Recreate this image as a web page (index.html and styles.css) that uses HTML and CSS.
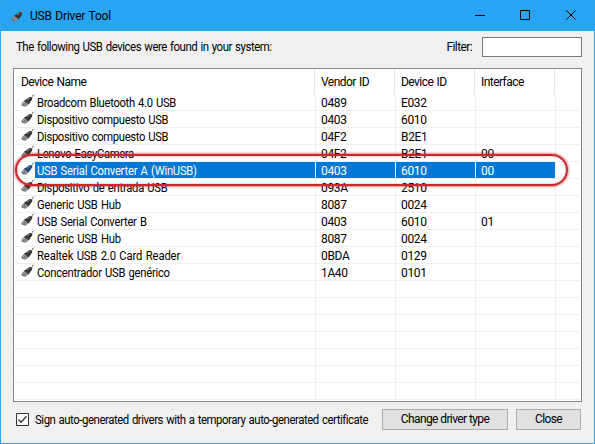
FILE: index.html
```
<!DOCTYPE html>
<html lang="en">
<head>
<meta charset="utf-8">
<title>USB Driver Tool</title>
<link rel="stylesheet" href="styles.css">
</head>
<body>
<svg width="0" height="0" class="defs">
  <symbol id="usb" viewBox="0 0 14 14">
    <path d="M9.500 4.500Q11.300 4.300 11.200 2.600Q11.500 1 13.500 .8" fill="none" stroke="#8a8a8a" stroke-width="1.300" stroke-dasharray="2 .6"/>
    <path d="M3.500 6.500L8.600 3Q11.300 2.800 11.300 5.200L8 10Z" fill="currentColor"/>
    <path d="M.3 10L3.500 6.500L8 10L4.500 12.700L1.200 12Z" fill="#777b80"/>
    <path d="M2.200 9.700l1.300-1M4.200 11.200l1.400-1.100" stroke="#ddd" stroke-width=".8"/>
    <path d="M3.500 6.500L8 10" stroke="#222" stroke-width=".8"/>
    <path d="M6 6.100L9 4.100" stroke="#999" stroke-width=".7"/>
  </symbol>
</svg>
<div class="window">
  <header class="titlebar">
    <svg class="icon"><use href="#usb"/></svg>
    <h1>USB Driver Tool</h1>
    <svg class="controls" width="102" height="12" viewBox="0 0 102 12" fill="none" stroke="#000"><path d="M0 5.500h10M45.500 .5h9v9h-9zM91.500 .5l9 9m0-9l-9 9"/></svg>
  </header>
  <div class="toolbar"><span class="intro narrow">The following USB devices were found in your system:</span><label class="flabel" for="filter">Filter:</label><input id="filter" type="text"></div>
  <main class="list">
    <div class="head"><span>Device Name</span><span>Vendor ID</span><span>Device ID</span><span>Interface</span></div>
    <div class="rows" id="rows"></div>
    <div class="ring"></div>
  </main>
  <footer class="footer">
    <svg class="check" width="13" height="13"><path d="M.5.5h12v12H.5z" fill="#fff" stroke="#333"/><path d="M2.500 6.500L5 9.200L10.500 3.300" fill="none" stroke="#333" stroke-width="1.300"/></svg>
    <div class="signbox"><span class="sign narrow">Sign auto-generated drivers with a temporary auto-generated certificate</span></div>
    <button class="change"><span>Change driver type</span></button><button class="close"><span>Close</span></button>
  </footer>
</div>
<script src="script.js"></script>
</body>
</html>
```
FILE: script.js
```
// name, vendor, device, interface, letter spacing of the name
const devices = [
  ["Broadcom Bluetooth 4.0 USB", "0489", "E032", "", -0.33],
  ["Dispositivo compuesto USB", "0403", "6010", "", -0.37],
  ["Dispositivo compuesto USB", "04F2", "B2E1", "", -0.37],
  ["Lenovo EasyCamera", "04F2", "B2E1", "00", -0.35],
  ["USB Serial Converter A (WinUSB)", "0403", "6010", "00", -0.25],
  ["Dispositivo de entrada USB", "093A", "2510", "", -0.28],
  ["Generic USB Hub", "8087", "0024", "", -0.2],
  ["USB Serial Converter B", "0403", "6010", "01", -0.28],
  ["Generic USB Hub", "8087", "0024", "", -0.2],
  ["Realtek USB 2.0 Card Reader", "0BDA", "0129", "", -0.13],
  ["Concentrador USB genérico", "1A40", "0101", "", -0.28]
];
const rowCount = 18;
const selected = 4;
let html = "";
for (let i = 0; i < rowCount; i++) {
  const d = devices[i];
  const icon = d ? '<svg class="icon"><use href="#usb"/></svg>' : "";
  const cells = d || ["", "", "", "", 0];
  html += `<div class="row${i === selected ? " selected" : ""}"><div class="name">${icon}<div class="label"><span class="narrow" style="letter-spacing:${cells[4]}px">${cells[0]}</span></div></div>` +
    cells.slice(1, 4).map(c => `<div class="cell">${c}</div>`).join("") + "<div></div></div>";
}
document.getElementById("rows").innerHTML = html;
```
FILE: styles.css
```
* { box-sizing: border-box; }
body { margin: 0; font: 12px/16px Roboto, "Liberation Sans", sans-serif; word-spacing: .8px; color: #000; overflow: hidden; }
.defs { position: absolute; }
.narrow { display: inline-block; transform: scaleX(.95); transform-origin: 0 0; white-space: nowrap; }
.window { width: 595px; height: 444px; border: 1px solid #2da5ee; background: #f0f0f0; display: flex; flex-direction: column; }
.titlebar { height: 30px; flex: none; background: #27a4f2; display: flex; align-items: center; padding: 0 17px 0 10px; }
.icon { width: 14px; height: 14px; flex: none; color: #333; }
h1 { font-size: 12px; font-weight: 400; margin: 0 auto 0 5px; letter-spacing: -.2px; }
.toolbar { display: flex; height: 37px; flex: none; padding: 6px 12px 0 15px; align-items: flex-start; }
.intro { padding-top: 2px; letter-spacing: -.47px; }
.flabel { margin: 2px 10px 0 auto; letter-spacing: -.6px; }
input { width: 100px; height: 20px; border: 1px solid #7a7a7a; background: #fff; padding: 2px; }
.list { position: relative; width: 569px; height: 334px; flex: none; margin-left: 12px; border: 1px solid #828790; background: #fff; padding: 1px; }
.head { display: grid; grid-template-columns: 300px 80px 80px 80px; height: 24px; letter-spacing: -.55px; }
.head span { padding: 4px 0 0 6px; border-right: 1px solid #e5e5e5; }
.rows { letter-spacing: -.35px; }
.row { display: grid; grid-template-columns: 301px 80px 80px 80px 24px; height: 17px; border-bottom: 1px solid #f0f0f0; }
.name, .cell { border-right: 1px solid #f0f0f0; white-space: nowrap; height: 16px; }
.name { display: flex; padding-left: 6px; }
.label { flex: 1; height: 16px; padding-left: 2px; line-height: 19px; }
.label .narrow { transform: scaleX(.937); }
.cell { padding-left: 5px; line-height: 19px; }
.selected .label, .selected .cell { background: #0078d7; color: #fff; }
.selected .icon { color: #174f83; }
.ring { position: absolute; left: 1px; top: 85px; width: 553px; height: 32px; border: 2px solid #c8282c; border-radius: 16px; box-shadow: 0 0 3px #c5161d, inset 0 0 2px #c5161d88; }
.footer { display: flex; align-items: flex-start; padding: 7px 13px 0 15px; }
.check { margin-top: 4px; flex: none; }
.signbox { width: 340px; margin: 3px 0 0 6px; }
.sign { letter-spacing: -.48px; }
button { flex: none; height: 21px; border: 1px solid #adadad; background: #e1e1e1; font: inherit; color: inherit; padding: 0; line-height: 19px; letter-spacing: -.6px; }
.change { width: 126px; margin-left: auto; }
.close { width: 65px; margin-left: 8px; }
```
